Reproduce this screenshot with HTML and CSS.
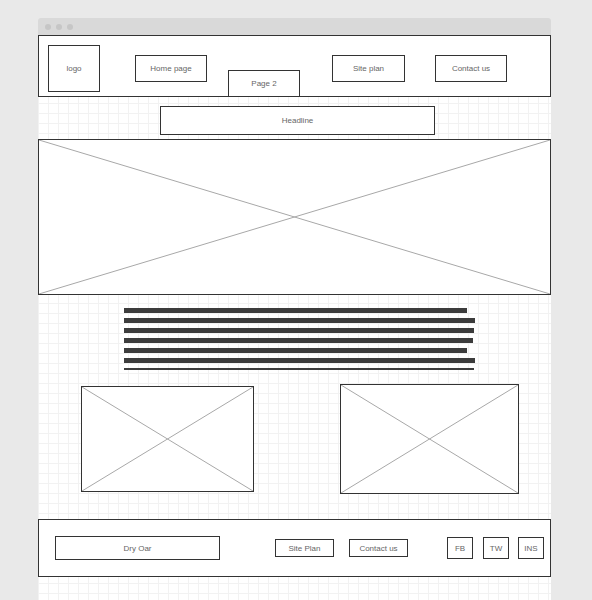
FILE: index.html
```html
<!DOCTYPE html>
<html lang="en">
  <head>
    <meta charset="UTF-8" />
    <meta name="viewport" content="width=device-width, initial-scale=1.0" />
    <title>Wireframe</title>
    <link rel="stylesheet" href="styles.css">
  </head>
  <body>
    <div class="window">
      <div class="titlebar">
        <span class="dot"></span>
        <span class="dot"></span>
        <span class="dot"></span>
      </div>

      <div class="canvas">
        <header class="header">
          <div class="box logo">logo</div>
          <div class="box nav home">Home page</div>
          <div class="box nav page2">Page 2</div>
          <div class="box nav siteplan">Site plan</div>
          <div class="box nav contact">Contact us</div>
        </header>

        <div class="box headline">Headline</div>

        <div class="placeholder hero">
          <svg viewBox="0 0 100 100" preserveAspectRatio="none">
            <line x1="0" y1="0" x2="100" y2="100" vector-effect="non-scaling-stroke" />
            <line x1="100" y1="0" x2="0" y2="100" vector-effect="non-scaling-stroke" />
          </svg>
        </div>

        <div class="text-lines">
          <div class="line" style="width: 343px"></div>
          <div class="line" style="width: 351px"></div>
          <div class="line" style="width: 350px"></div>
          <div class="line" style="width: 349px"></div>
          <div class="line" style="width: 343px"></div>
          <div class="line" style="width: 351px"></div>
          <div class="line thin" style="width: 350px"></div>
        </div>

        <div class="pictures">
          <div class="placeholder pic-left">
            <svg viewBox="0 0 100 100" preserveAspectRatio="none">
              <line x1="0" y1="0" x2="100" y2="100" vector-effect="non-scaling-stroke" />
              <line x1="100" y1="0" x2="0" y2="100" vector-effect="non-scaling-stroke" />
            </svg>
          </div>
          <div class="placeholder pic-right">
            <svg viewBox="0 0 100 100" preserveAspectRatio="none">
              <line x1="0" y1="0" x2="100" y2="100" vector-effect="non-scaling-stroke" />
              <line x1="100" y1="0" x2="0" y2="100" vector-effect="non-scaling-stroke" />
            </svg>
          </div>
        </div>

        <footer class="footer">
          <div class="box brand">Dry Oar</div>
          <div class="box flink siteplan-f">Site Plan</div>
          <div class="box flink contact-f">Contact us</div>
          <div class="box social fb">FB</div>
          <div class="box social tw">TW</div>
          <div class="box social ins">INS</div>
        </footer>
      </div>
    </div>
  </body>
</html>
```

FILE: styles.css
```css
* {
  box-sizing: border-box;
}

body {
  margin: 0;
  background-color: #e9e9e9;
  font-family: "Liberation Sans", Arial, sans-serif;
  font-size: 8px;
  color: #666666;
}

.window {
  width: 513px;
  margin: 18px 0 0 38px;
}

.titlebar {
  height: 17px;
  background-color: #d9d9d9;
  border-radius: 3px 3px 0 0;
  display: flex;
  align-items: center;
  gap: 5px;
  padding-left: 7px;
}

.dot {
  width: 6px;
  height: 6px;
  border-radius: 50%;
  background-color: #c6c6c6;
}

.canvas {
  background-color: #ffffff;
  background-image: linear-gradient(to right, #f2f2f2 1px, transparent 1px),
    linear-gradient(to bottom, #f2f2f2 1px, transparent 1px);
  background-size: 10px 10px;
  background-position: 0 8px;
  padding-bottom: 40px;
}

.box {
  border: 1px solid #333333;
  background-color: #ffffff;
  display: flex;
  align-items: center;
  justify-content: center;
}

/* header */
.header {
  height: 62px;
  border: 1px solid #333333;
  background-color: #ffffff;
  display: flex;
  align-items: flex-start;
  padding: 9px 0 0 9px;
}

.logo {
  width: 52px;
  height: 47px;
}

.nav {
  width: 72px;
  height: 27px;
}

.home {
  margin: 10px 0 0 35px;
}

.page2 {
  margin: 25px 0 0 21px;
}

.siteplan {
  width: 73px;
  margin: 10px 0 0 32px;
}

.contact {
  margin: 10px 0 0 30px;
}

.headline {
  width: 275px;
  height: 29px;
  margin: 9px 0 0 122px;
}

/* image placeholders */
.placeholder {
  border: 1px solid #333333;
  background-color: #ffffff;
}

.placeholder svg {
  display: block;
  width: 100%;
  height: 100%;
}

.placeholder line {
  stroke: #a8a8a8;
  stroke-width: 1;
}

.hero {
  height: 156px;
  margin-top: 4px;
}

.text-lines {
  margin: 13px 0 0 86px;
  display: flex;
  flex-direction: column;
  gap: 5px;
}

.line {
  height: 5px;
  background-color: #3c3c3c;
}

.line.thin {
  height: 2px;
}

.pictures {
  display: flex;
  align-items: flex-start;
  margin-top: 14px;
}

.pic-left {
  width: 173px;
  height: 106px;
  margin: 2px 0 0 43px;
}

.pic-right {
  width: 179px;
  height: 110px;
  margin-left: 86px;
}

/* footer */
.footer {
  height: 58px;
  margin-top: 25px;
  border: 1px solid #333333;
  background-color: #ffffff;
  display: flex;
  align-items: center;
  padding-left: 16px;
}

.brand {
  width: 165px;
  height: 24px;
}

.flink {
  width: 59px;
  height: 18px;
}

.siteplan-f {
  margin-left: 55px;
}

.contact-f {
  margin-left: 15px;
}

.social {
  width: 26px;
  height: 22px;
}

.fb {
  margin-left: 39px;
}

.tw {
  margin-left: 10px;
}

.ins {
  margin-left: 9px;
}
```
